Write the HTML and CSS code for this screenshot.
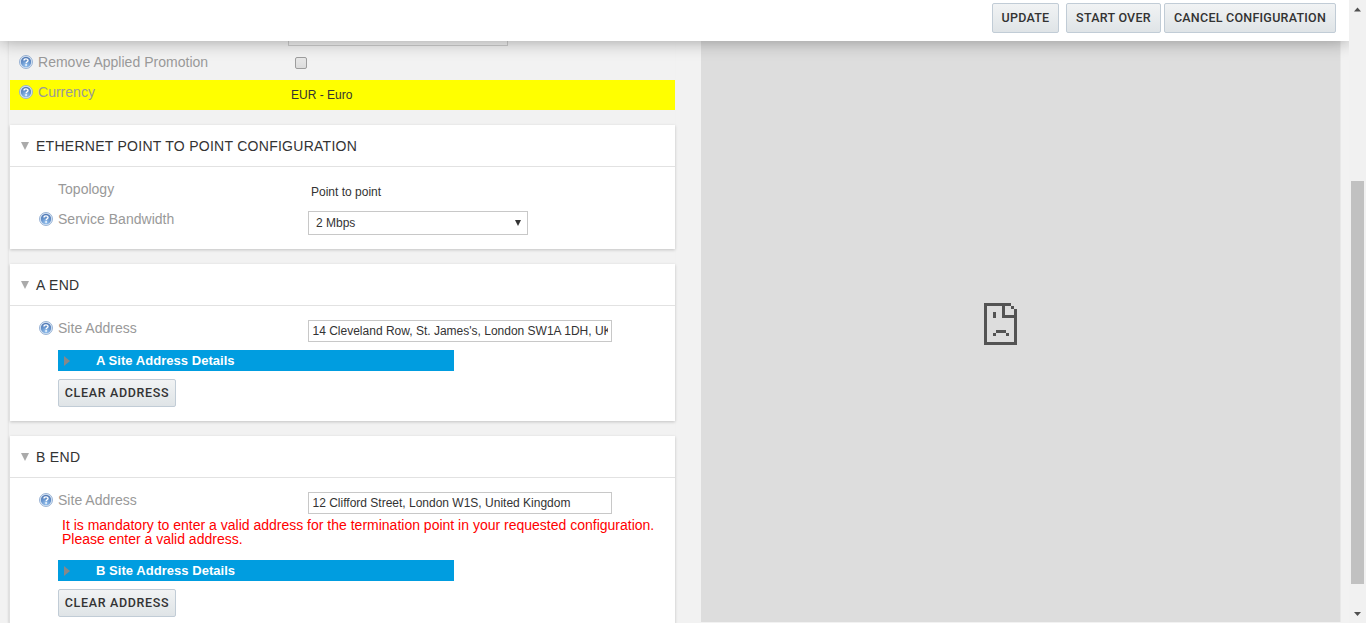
FILE: index.html
```html
<!DOCTYPE html>
<html lang="en">
<head>
<meta charset="utf-8">
<title>Ethernet Point to Point Configuration</title>
<link rel="stylesheet" href="styles.css">
</head>
<body>
<svg class="defs" width="0" height="0">
  <defs>
    <radialGradient id="ball" cx="50%" cy="85%" r="80%">
      <stop offset="0" stop-color="#9cc6f0"/><stop offset=".5" stop-color="#6c9ad2"/><stop offset="1" stop-color="#5279b4"/>
    </radialGradient>
    <symbol id="help" viewBox="0 0 14 14">
      <circle cx="7" cy="7" r="6.5" fill="#dce8f6" stroke="#8fabd0" stroke-width=".9"/>
      <circle cx="7" cy="7" r="5.2" fill="url(#ball)"/>
      <path d="M5 5.500C5 3.300 9 3.300 9 5.400C9 6.800 7.200 6.800 7.100 8.300" fill="none" stroke="#fff" stroke-width="1.400"/>
      <rect x="6.300" y="9.200" width="1.600" height="1.500" fill="#fff"/>
    </symbol>
  </defs>
</svg>
<div class="app">
  <div class="page">
    <header class="toolbar">
      <button class="btn update">UPDATE</button>
      <button class="btn start">START OVER</button>
      <button class="btn cancel">CANCEL CONFIGURATION</button>
    </header>
    <div class="columns">
      <main class="form">
        <div class="cut"></div>
        <div class="row general">
          <svg class="help"><use href="#help"/></svg><span class="label">Remove Applied Promotion</span><span class="check"></span>
        </div>
        <div class="row general currency">
          <svg class="help"><use href="#help"/></svg><span class="label">Currency</span><span class="value">EUR - Euro</span>
        </div>
        <section class="card">
          <h2 class="long"><i class="tri"></i>ETHERNET POINT TO POINT CONFIGURATION</h2>
          <div class="body fields">
            <div class="row"><span class="help"></span><span class="label">Topology</span><span class="value">Point to point</span></div>
            <div class="row"><svg class="help"><use href="#help"/></svg><span class="label">Service Bandwidth</span><div class="select">2 Mbps<i class="arrow"></i></div></div>
          </div>
        </section>
        <section class="card">
          <h2><i class="tri"></i>A END</h2>
          <div class="body">
            <div class="row"><svg class="help"><use href="#help"/></svg><span class="label">Site Address</span><div class="input"><span>14 Cleveland Row, St. James's, London SW1A 1DH, UK</span></div></div>
            <div class="details"><i class="play"></i>A Site Address Details</div>
            <button class="btn clear">CLEAR ADDRESS</button>
          </div>
        </section>
        <section class="card">
          <h2><i class="tri"></i>B END</h2>
          <div class="body">
            <div class="row"><svg class="help"><use href="#help"/></svg><span class="label">Site Address</span><div class="input"><span>12 Clifford Street, London W1S, United Kingdom</span></div></div>
            <p class="error">It is mandatory to enter a valid address for the termination point in your requested configuration.<br>Please enter a valid address.</p>
            <div class="details"><i class="play"></i>B Site Address Details</div>
            <button class="btn clear">CLEAR ADDRESS</button>
          </div>
        </section>
      </main>
      <aside class="frame">
        <svg width="33" height="42" viewBox="0 0 33 42" fill="#535353" shape-rendering="crispEdges">
          <path fill-rule="evenodd" d="M0 0H27V3H30V6H33V42H0ZM3 3V39H30V15H18V3ZM21 3V12H30V6H27V3Z"/>
          <path d="M9 9H12V15H9ZM12 27H22V30H12ZM9 30H12V33H9ZM22 30H25V33H22Z"/>
        </svg>
      </aside>
    </div>
  </div>
  <div class="scroll">
    <svg width="17" height="17"><path d="M5 11.500H12L8.500 7.500Z" fill="#505050"/></svg>
    <div class="thumb"></div>
    <svg width="17" height="17"><path d="M5 6H12L8.500 10Z" fill="#505050"/></svg>
  </div>
</div>
</body>
</html>
```
FILE: styles.css
```css
* { box-sizing: border-box; }
body { margin: 0; font-family: "Liberation Sans", Arial, sans-serif; font-size: 12px; color: #333; background: #f2f2f2; overflow: hidden; }
.defs { position: absolute; }
.app { display: flex; width: 1366px; height: 623px; overflow: hidden; }
.page { width: 1349px; display: flex; flex-direction: column; overflow: hidden; }
.toolbar { position: relative; z-index: 2; flex: none; height: 41px; background: #fff; display: flex; justify-content: flex-end; padding: 3px 13px 0 0; box-shadow: 0 0 18px rgba(0,0,0,.36); }
.btn { font: 500 12.5px Roboto, sans-serif; letter-spacing: .25px; color: #333; padding: 0; border: 1px solid #c1ccd6; border-radius: 2px; background: linear-gradient(#f1f3f4, #dfe4e7); white-space: nowrap; display: block; }
.toolbar .btn { height: 30px; padding-bottom: 1px; }
.update { width: 67px; margin-right: 7px; }
.start { width: 95px; margin-right: 3px; }
.cancel { width: 172px; }
.columns { flex: 1; min-height: 0; display: flex; }
.form { width: 666px; margin-left: 9px; padding-left: 1px; box-shadow: -1px 0 2px rgba(0,0,0,.06); }
.cut { width: 220px; height: 5px; margin: 0 0 4px 278px; border: 1px solid #ccc; border-top: 0; }
.row { display: flex; height: 30px; }
.help { width: 14px; height: 14px; margin: 5px 5px 0 0; flex: none; }
.label { width: 250px; flex: none; font-size: 14px; line-height: 16px; padding-top: 4px; color: #999; letter-spacing: .02px; }
.general { padding-left: 9px; }
.currency { background: #ff0; }
.value { line-height: 14px; padding: 8px 0 0 3px; }
.check { width: 12px; height: 12px; margin: 7px 0 0 7px; border: 1px solid #9d9d9d; border-radius: 2px; background: linear-gradient(#e8e8e8, #dcdcdc); }
.card { margin-top: 15px; background: #fff; box-shadow: 0 1px 3px rgba(0,0,0,.2); }
h2 { margin: 0; height: 42px; border-bottom: 1px solid #e2e2e2; display: flex; align-items: center; padding-left: 11px; font-size: 14px; font-weight: 400; letter-spacing: .3px; }
h2.long { letter-spacing: .27px; }
.tri { border: 4px solid transparent; border-top: 8px solid #aaa; border-bottom: 0; margin-right: 7px; }
.body { padding: 10px 0 14px 29px; }
.fields { padding-bottom: 0; }
.fields .row + .row { height: 42px; }
.select { width: 220px; height: 24px; margin-top: 4px; border: 1px solid #c8c8c8; padding: 0 6px 0 7px; line-height: 22px; display: flex; align-items: center; justify-content: space-between; }
.arrow { border: 3.5px solid transparent; border-top: 6px solid #333; border-bottom: 0; }
.input { width: 304px; height: 22px; margin-top: 4px; border: 1px solid #c8c8c8; padding: 0 3px; line-height: 20px; }
.input span { display: block; overflow: hidden; white-space: nowrap; padding-left: .5px; }
.details { width: 396px; height: 21px; margin: 4px 0 8px 19px; background: #009de0; color: #fff; display: flex; align-items: center; padding-left: 6px; font-size: 13px; font-weight: 700; letter-spacing: .04px; }
.play { border: 5px solid transparent; border-left: 6px solid #888; border-right: 0; margin-right: 26px; }
.clear { width: 118px; height: 28px; margin-left: 19px; padding-bottom: 2px; letter-spacing: .65px; }
.error { margin: 0 0 14px 23px; font-size: 14px; line-height: 14px; color: #f00; white-space: nowrap; }
.frame { width: 640px; height: 581px; margin-left: 26px; background: #ddd; display: flex; align-items: flex-start; justify-content: center; padding-top: 262px; border-right: 1px solid #e8e8e8; }
.frame svg { margin-right: 40px; }
.scroll { width: 17px; background: #f1f1f1; display: flex; flex-direction: column; align-items: center; }
.scroll svg { flex: none; }
.thumb { width: 13px; height: 403px; margin: 164px 0 22px; background: #c1c1c1; }
```
